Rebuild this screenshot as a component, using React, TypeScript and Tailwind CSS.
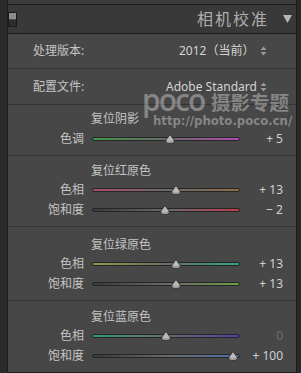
import React from "react";

const FONT = { fontFamily: '"Noto Sans", "Noto Sans CJK SC", sans-serif' };

type Slider = { label: string; value: number; text: string; from: string; to: string; dim?: boolean };

const sections: { title: string; pt: string; rows: Slider[] }[] = [
    {
        title: "复位阴影",
        pt: "pt-[4px]",
        rows: [{ label: "色调", value: 5, text: "+ 5", from: "#3f9a45", to: "#b04cb4" }],
    },
    {
        title: "复位红原色",
        pt: "pt-[5px]",
        rows: [
            { label: "色相", value: 13, text: "+ 13", from: "#b04a6a", to: "#8f6a46" },
            { label: "饱和度", value: -2, text: "− 2", from: "#3a3a3a", to: "#c23a4c" },
        ],
    },
    {
        title: "复位绿原色",
        pt: "pt-[8px]",
        rows: [
            { label: "色相", value: 13, text: "+ 13", from: "#8e9c42", to: "#2fa58a" },
            { label: "饱和度", value: 13, text: "+ 13", from: "#3a3a3a", to: "#6c9a46" },
        ],
    },
    {
        title: "复位蓝原色",
        pt: "pt-[6px]",
        rows: [
            { label: "色相", value: 0, text: "0", from: "#2f9a80", to: "#5a3ea8", dim: true },
            { label: "饱和度", value: 100, text: "+ 100", from: "#3a3a3a", to: "#4a70a8" },
        ],
    },
];

function Thumb() {
    return (
        <svg width="11" height="10" viewBox="0 0 11 10" className="block">
            <path d="M5.5 0.5 L9.5 6 Q10.5 9.5 5.5 9.5 Q0.5 9.5 1.5 6 Z" fill="#b9b9b9" stroke="#2a2a2a" strokeWidth="0.8" />
            <path d="M2 7.5 Q5.5 9 9 7.5" stroke="#8a8a8a" strokeWidth="1" fill="none" />
        </svg>
    );
}

function UpDown() {
    return (
        <svg width="7" height="10" viewBox="0 0 7 10" className="block">
            <path d="M3.5 0.5 L6.5 4 L0.5 4 Z" fill="#9a9a9a" />
            <path d="M0.5 6 L6.5 6 L3.5 9.5 Z" fill="#9a9a9a" />
        </svg>
    );
}

function SliderRow({ row }: { row: Slider }) {
    const pct = Math.min(95, Math.max(0, ((row.value + 100) / 200) * 100));
    return (
        <div className="flex items-center h-[19.5px]">
            <div className="w-[76px] text-right text-[12px] text-[#c4c4c4]">{row.label}</div>
            <div className="relative ml-[8px] w-[148px] h-[10px] flex items-center">
                <div
                    className="w-full h-[4px] rounded-full border border-[#262626]"
                    style={{ background: `linear-gradient(to right, ${row.from}, #6a6a6a 50%, ${row.to})` }}
                />
                <div className="absolute top-[0px] -translate-x-1/2" style={{ left: `${pct}%` }}>
                    <Thumb />
                </div>
            </div>
            <div className={`flex-1 text-right pr-[13px] text-[12px] ${row.dim ? "text-[#6e6e6e]" : "text-[#d0d0d0]"}`}>
                {row.text}
            </div>
        </div>
    );
}

export default function App() {
    return (
        <div className="w-[301px] h-[373px] bg-[#2a2a2a] pl-[7px] pr-[4px] overflow-hidden" style={FONT}>
            <div className="flex flex-col border-x border-[#1b1b1b]">
                {/* previous panel bottom */}
                <div className="h-[5px] bg-[#3b3b3b] border-b border-[#1b1b1b]" />

                {/* header */}
                <div className="h-[29px] bg-[#393939] border-b border-[#1b1b1b] flex items-center">
                    <div className="w-[9px] h-[15px] bg-[#2c2c2c] border border-[#1a1a1a] flex flex-col">
                        <div className="h-[7px] bg-[#8c8c8c] border-b border-[#4a4a4a]" />
                    </div>
                    <div className="flex-1 text-right text-[16px] tracking-[2px] text-[#adadad] pr-[14px]">相机校准</div>
                    <svg width="9" height="8" viewBox="0 0 9 8" className="mr-[4px]">
                        <path d="M0 0 L9 0 L4.5 8 Z" fill="#b5b5b5" />
                    </svg>
                </div>

                {/* content */}
                <div className="relative bg-[#474747] border-b border-[#1b1b1b] text-[#c4c4c4]">
                    <div className="h-[35px] flex items-center border-b border-[#343434] pl-[25px] text-[12px]">
                        <span className="w-[146px]">处理版本:</span>
                        <span className="text-[#d4d4d4]">2012（当前）</span>
                        <span className="ml-[6px]"><UpDown /></span>
                    </div>
                    <div className="h-[36px] flex items-center border-b border-[#343434] pl-[25px] text-[12px]">
                        <span className="w-[133px]">配置文件:</span>
                        <span className="text-[#d4d4d4]">Adobe Standard</span>
                        <span className="ml-[3px]"><UpDown /></span>
                    </div>

                    {sections.map((s, i) => (
                        <div
                            key={s.title}
                            className={`${s.pt} pb-[6px] ${i < sections.length - 1 ? "border-b border-[#343434]" : ""}`}
                        >
                            <div className="pl-[83px] h-[20px] text-[12px] text-[#c4c4c4] leading-[20px]">{s.title}</div>
                            {s.rows.map((r) => (
                                <SliderRow key={s.title + r.label} row={r} />
                            ))}
                        </div>
                    ))}

                    {/* watermark */}
                    <div className="absolute inset-0 text-white/35 pointer-events-none select-none">
                        <span
                            className="absolute left-[134px] top-[51px] text-[30px] font-semibold leading-none tracking-[-2px]"
                            style={{ fontFamily: '"Open Sans", sans-serif' }}
                        >
                            poco
                        </span>
                        <span
                            className="absolute left-[203px] top-[58px] text-[19.5px] font-bold leading-none"
                            style={{ fontFamily: '"Noto Sans CJK SC", sans-serif' }}
                        >
                            摄影专题
                        </span>
                        <span
                            className="absolute left-[145px] top-[82px] text-[11.7px] font-bold leading-none"
                            style={{ fontFamily: '"DejaVu Sans", sans-serif' }}
                        >
                            http://photo.poco.cn/
                        </span>
                    </div>
                </div>
            </div>
        </div>
    );
}
